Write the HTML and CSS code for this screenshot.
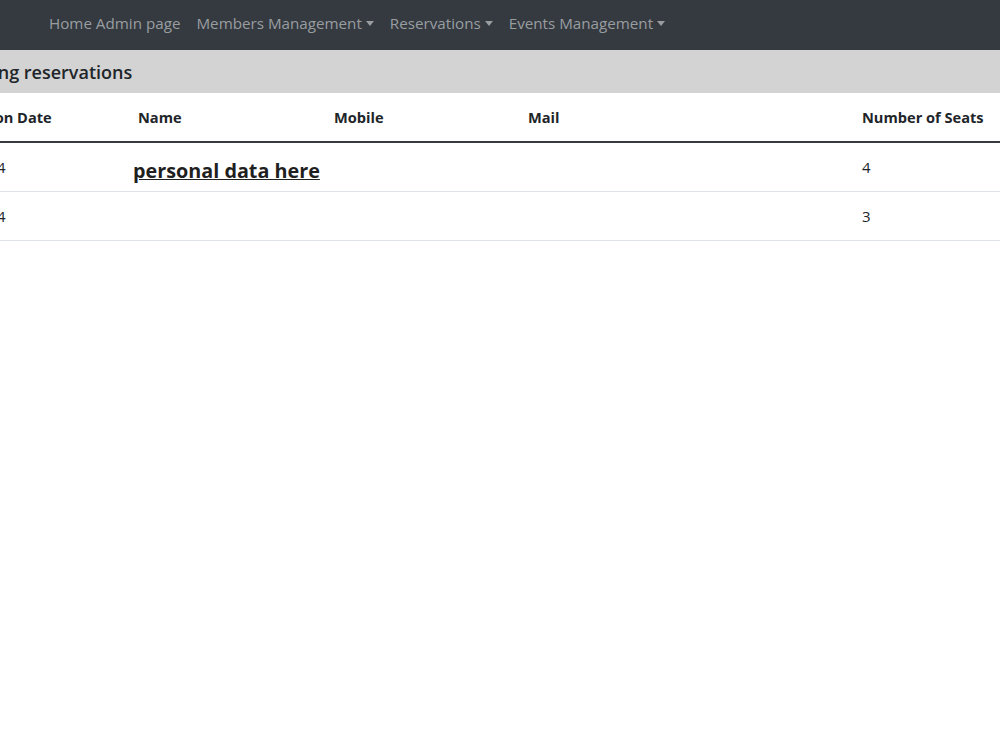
FILE: index.html
```html
<!DOCTYPE html>
<html>
<head>
<meta charset="utf-8">
<link rel="stylesheet" href="styles.css">
</head>
<body>
<nav class="navbar">
  <ul class="nav">
    <li><a class="nav-link" href="#">Home Admin page</a></li>
    <li><a class="nav-link dropdown" href="#">Members Management</a></li>
    <li><a class="nav-link dropdown" href="#">Reservations</a></li>
    <li><a class="nav-link dropdown" href="#">Events Management</a></li>
  </ul>
</nav>
<main class="page">
  <h4 class="band">Upcoming reservations</h4>
  <div class="table-wrap">
    <table class="table">
      <colgroup>
        <col class="c-date"><col class="c-name"><col class="c-mobile"><col class="c-mail"><col class="c-seats">
      </colgroup>
      <thead>
        <tr><th>Reservation Date</th><th>Name</th><th>Mobile</th><th>Mail</th><th>Number of Seats</th></tr>
      </thead>
      <tbody>
        <tr><td>12/06/2024</td><td></td><td></td><td></td><td>4</td></tr>
        <tr><td>12/06/2024</td><td></td><td></td><td></td><td>3</td></tr>
      </tbody>
    </table>
    <span class="redact">personal data here</span>
  </div>
</main>
</body>
</html>
```
FILE: styles.css
```css
html, body {
  margin: 0;
  padding: 0;
  overflow: hidden;
}
body {
  font-family: "Open Sans", "Noto Sans", sans-serif;
  font-size: 15px;
  color: #212529;
  background: #fff;
}
.navbar {
  background: #343a40;
  height: 50px;
  display: flex;
  align-items: center;
  padding-left: 41px;
  padding-bottom: 4px;
  box-sizing: border-box;
}
.nav {
  list-style: none;
  margin: 0;
  padding: 0;
  display: flex;
}
.nav-link {
  display: block;
  padding: 8px;
  color: #9a9da0;
  text-decoration: none;
  font-size: 15.2px;
  line-height: 24px;
}
.dropdown::after {
  content: "";
  display: inline-block;
  margin-left: 4px;
  vertical-align: 3px;
  border-top: 5px solid #9a9da0;
  border-left: 4.5px solid transparent;
  border-right: 4.5px solid transparent;
}
.page {
  margin-left: -86px;
  width: 1200px;
}
.band {
  margin: 0;
  background: #d3d3d3;
  height: 43px;
  line-height: 45px;
  font-size: 18px;
  font-weight: 600;
  padding-left: 17px;
}
.table-wrap {
  position: relative;
}
.table {
  border-collapse: collapse;
  table-layout: fixed;
  width: 1200px;
}
.c-date { width: 212px; }
.c-name { width: 196px; }
.c-mobile { width: 194px; }
.c-mail { width: 334px; }
.c-seats { width: 264px; }
.table th, .table td {
  text-align: left;
  padding: 0 12px;
  height: 48px;
  vertical-align: middle;
}
.table th {
  font-weight: 700;
  font-size: 14.6px;
  border-bottom: 2px solid #343a40;
}
.table td {
  font-size: 15px;
  border-bottom: 1px solid #dee2e6;
}
.redact {
  position: absolute;
  left: 219px;
  top: 64px;
  font-size: 19.8px;
  font-weight: 700;
  text-decoration: underline;
  color: #1f1f1f;
}
```
